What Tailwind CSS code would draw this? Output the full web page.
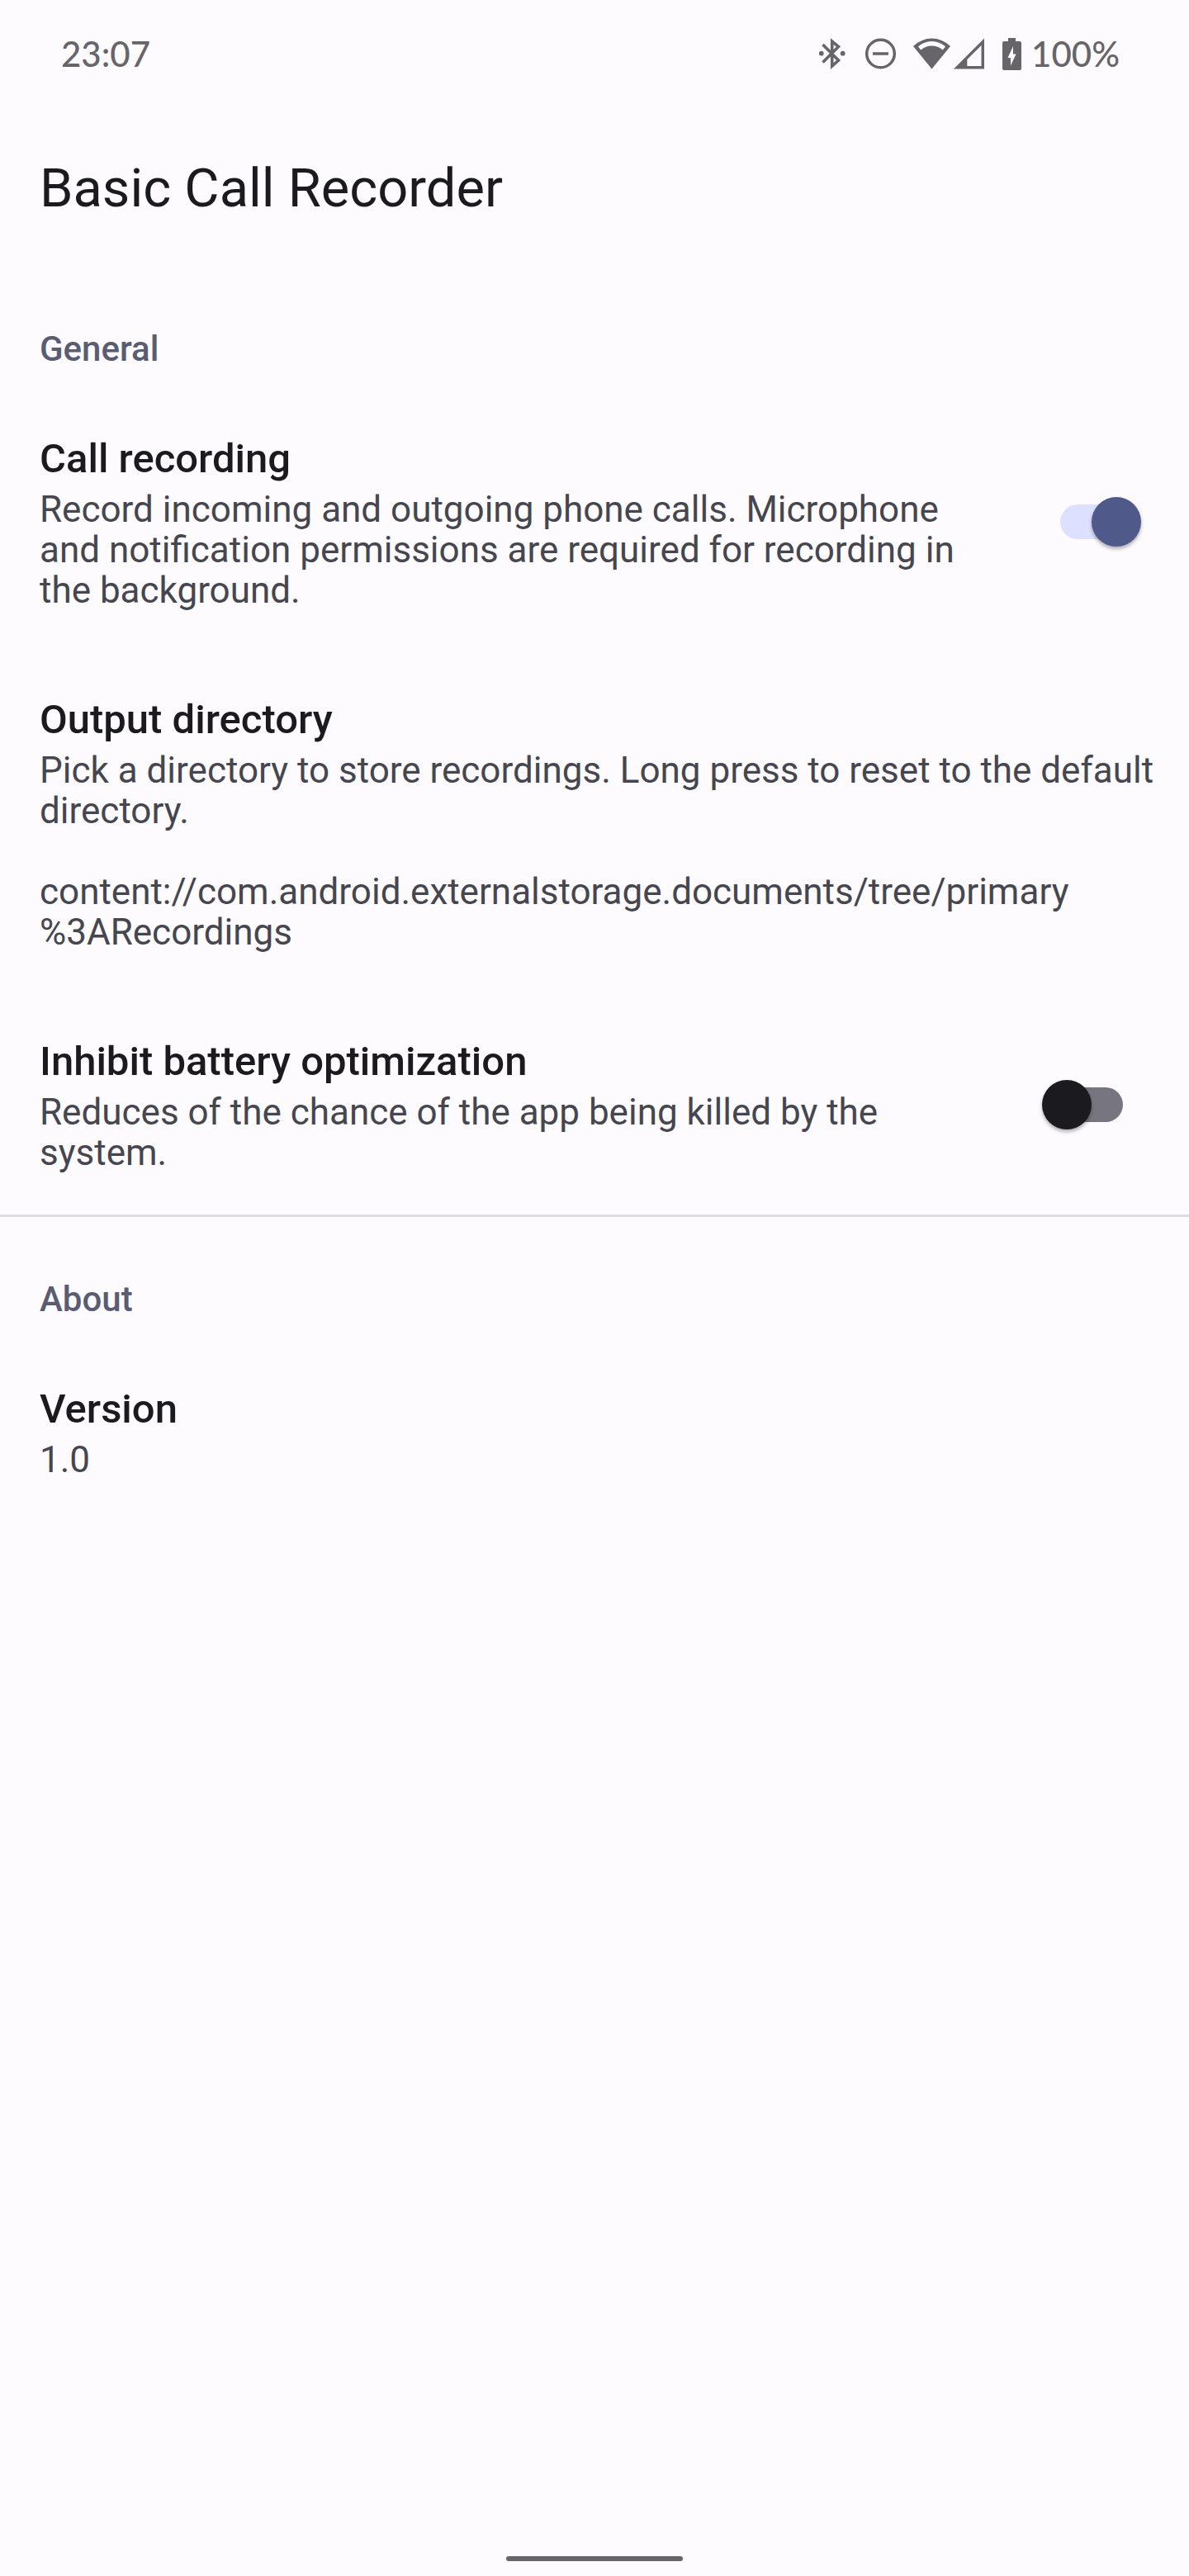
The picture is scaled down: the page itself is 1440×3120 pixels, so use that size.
<!DOCTYPE html>
<html lang="en">
<head>
<meta charset="utf-8">
<meta name="viewport" content="width=device-width, initial-scale=1">
<title>Basic Call Recorder</title>
<script src="https://cdn.jsdelivr.net/npm/@tailwindcss/browser@4"></script>
</head>
<body class="flex min-h-screen flex-col bg-[#fefbff] font-['Roboto',sans-serif] text-[#1b1b1f]">

<!-- Status bar -->
<header class="flex h-[130px] items-center justify-between pr-[84px] pl-[74px] font-['Lato',sans-serif] text-[42px] font-medium text-[#67656a]">
  <time>23:07</time>
  <div class="flex items-center">
    <svg class="mr-6 h-[38px] w-8" viewBox="0 0 32 38" fill="none" aria-label="Bluetooth connected">
      <path d="M4.5 8 23.5 27 15.700 34V4L23.5 10.500 4.500 29.500" stroke="currentColor" stroke-width="3.600"/>
      <circle cx="2.700" cy="18.700" r="2.900" fill="currentColor"/><circle cx="28.700" cy="18.700" r="2.900" fill="currentColor"/>
    </svg>
    <svg class="mr-5 h-[38px] w-[38px]" viewBox="0 0 38 38" fill="none" stroke="currentColor" stroke-width="3.500" aria-label="Do not disturb">
      <circle cx="18.500" cy="19" r="16.800"/><path d="M9 19H28"/>
    </svg>
    <svg class="mr-1 h-[38px] w-[45px]" viewBox="0 0 45 38" fill="currentColor" fill-rule="evenodd" aria-label="Wi-Fi">
      <path d="M0 10Q10 .5 22.500 .5T45 10L22.500 37.500ZM6 10.600 9.300 14.600Q15 9.500 22.500 9.500T35.700 14.600L39 10.600Q32 4 22.500 4T6 10.600Z"/>
    </svg>
    <svg class="mr-[22px] h-[38px] w-[37px]" viewBox="0 0 37 38" fill="currentColor" fill-rule="evenodd" aria-label="Mobile signal">
      <path d="M0 37.500 37 .5V37.500ZM16.300 34H33.500V9L16.300 26Z"/>
    </svg>
    <svg class="mr-3 h-[39px] w-[23px]" viewBox="0 0 23 39" fill="currentColor" fill-rule="evenodd" aria-label="Battery charging">
      <path d="M7 0H16V4H21Q23 4 23 6V37Q23 39 21 39H2Q0 39 0 37V6Q0 4 2 4H7ZM13 10 6.500 24H10V33.500L16.500 19.500H13Z"/>
    </svg>
    <span>100%</span>
  </div>
</header>

<main class="flex-1">
  <h1 class="px-12 pt-[59px] pb-14 text-[65px] leading-[78px]">Basic Call Recorder</h1>

  <section>
    <h2 class="px-12 pt-[75px] pb-[27px] text-[42px] leading-[49px] font-medium text-[#5a5d72]">General</h2>

    <label class="flex items-center gap-20 py-[50px] pr-[58px] pl-12">
      <span class="flex-1">
        <span class="block text-[49px] leading-[64px] font-medium">Call recording</span>
        <span class="mt-[5px] block text-[44px] leading-[49px] text-[#46464f]">Record incoming and outgoing phone calls. Microphone and notification permissions are required for recording in the background.</span>
      </span>
      <input type="checkbox" role="switch" checked class="relative h-[60px] w-[120px] shrink-0 appearance-none before:absolute before:top-[9px] before:left-[9px] before:h-[42px] before:w-[89px] before:rounded-full before:bg-[#777680] after:absolute after:top-0 after:left-0 after:size-[60px] after:rounded-full after:bg-[#1b1b1f] after:shadow-[0_3px_4px_rgba(0,0,0,0.3)] checked:before:left-[22px] checked:before:bg-[#dee0ff] checked:after:left-[60px] checked:after:bg-[#4f5a8a]">
    </label>

    <button type="button" class="block w-full py-[50px] pr-10 pl-12 text-left">
      <span class="block text-[49px] leading-[64px] font-medium">Output directory</span>
      <span class="mt-[5px] block text-[44px] leading-[49px] text-[#46464f]">Pick a directory to store recordings. Long press to reset to the default directory.<br><br>content://com.android.externalstorage.documents/tree/primary<wbr>%3ARecordings</span>
    </button>

    <label class="flex items-center gap-20 py-[50px] pr-[58px] pl-12">
      <span class="flex-1">
        <span class="block text-[49px] leading-[64px] font-medium">Inhibit battery optimization</span>
        <span class="mt-[5px] block text-[44px] leading-[49px] text-[#46464f]">Reduces of the chance of the app being killed by the system.</span>
      </span>
      <input type="checkbox" role="switch" class="relative h-[60px] w-[120px] shrink-0 appearance-none before:absolute before:top-[9px] before:left-[9px] before:h-[42px] before:w-[89px] before:rounded-full before:bg-[#777680] after:absolute after:top-0 after:left-0 after:size-[60px] after:rounded-full after:bg-[#1b1b1f] after:shadow-[0_3px_4px_rgba(0,0,0,0.3)] checked:before:left-[22px] checked:before:bg-[#dee0ff] checked:after:left-[60px] checked:after:bg-[#4f5a8a]">
    </label>
  </section>

  <section class="border-t-3 border-[#dfdde1]">
    <h2 class="px-12 pt-[75px] pb-[27px] text-[42px] leading-[49px] font-medium text-[#5a5d72]">About</h2>
    <div class="px-12 py-[50px]">
      <h3 class="text-[49px] leading-[64px] font-medium">Version</h3>
      <p class="mt-[5px] text-[44px] leading-[49px] text-[#46464f]">1.0</p>
    </div>
  </section>
</main>

<!-- Gesture navigation handle -->
<footer class="flex justify-center pb-[18px]">
  <div class="h-[6px] w-[214px] rounded-full bg-[#67656a]"></div>
</footer>
</body>
</html>
